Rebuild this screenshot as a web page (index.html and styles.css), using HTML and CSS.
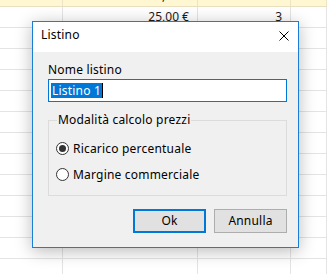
FILE: index.html
```html
<!DOCTYPE html>
<html lang="it">
<head>
<meta charset="utf-8">
<title>Listino</title>
<link rel="stylesheet" href="styles.css">
</head>
<body>
<div class="sheet">
  <div class="row row-sel"><div class="cell"></div><div class="cell num">0,00 €</div><div class="cell num">0</div><div class="cell"></div></div>
  <div class="row"><div class="cell"></div><div class="cell num">25,00 €</div><div class="cell num">3</div><div class="cell"></div></div>
  <div class="row"><div class="cell"></div><div class="cell"></div><div class="cell"></div><div class="cell"></div></div>
  <div class="row"><div class="cell"></div><div class="cell"></div><div class="cell"></div><div class="cell"></div></div>
  <div class="row"><div class="cell"></div><div class="cell"></div><div class="cell"></div><div class="cell"></div></div>
  <div class="row"><div class="cell"></div><div class="cell"></div><div class="cell"></div><div class="cell"></div></div>
  <div class="row"><div class="cell"></div><div class="cell"></div><div class="cell"></div><div class="cell"></div></div>
  <div class="row"><div class="cell"></div><div class="cell"></div><div class="cell"></div><div class="cell"></div></div>
  <div class="row"><div class="cell"></div><div class="cell"></div><div class="cell"></div><div class="cell"></div></div>
  <div class="row"><div class="cell"></div><div class="cell"></div><div class="cell"></div><div class="cell"></div></div>
  <div class="row"><div class="cell"></div><div class="cell"></div><div class="cell"></div><div class="cell"></div></div>
  <div class="row"><div class="cell"></div><div class="cell"></div><div class="cell"></div><div class="cell"></div></div>
  <div class="row"><div class="cell"></div><div class="cell"></div><div class="cell"></div><div class="cell"></div></div>
  <div class="row"><div class="cell"></div><div class="cell"></div><div class="cell"></div><div class="cell"></div></div>
</div>

<div class="dialog">
  <div class="titlebar">
    <span class="title">Listino</span>
    <svg class="close" width="10" height="10" viewBox="0 0 10 10"><path d="M0.5 0.5 L9.5 9.5 M9.5 0.5 L0.5 9.5" stroke="#000" stroke-width="1" fill="none"/></svg>
  </div>
  <div class="body">
    <div class="label">Nome listino</div>
    <div class="input"><span class="sel">Listino 1</span><span class="caret"></span></div>
    <fieldset class="group">
      <legend>Modalità calcolo prezzi</legend>
      <div class="radio-row"><span class="radio checked"></span><span>Ricarico percentuale</span></div>
      <div class="radio-row"><span class="radio"></span><span>Margine commerciale</span></div>
    </fieldset>
    <div class="buttons">
      <div class="btn btn-default">Ok</div>
      <div class="btn">Annulla</div>
    </div>
  </div>
</div>
</body>
</html>
```

FILE: styles.css
```css
html, body {
  margin: 0;
  padding: 0;
}
body {
  width: 327px;
  height: 274px;
  overflow: hidden;
  background: #fff;
  font-family: "Noto Sans", "Open Sans", sans-serif;
  font-size: 12px;
  color: #000;
  position: relative;
}
.sheet {
  margin-top: -14px;
  display: flex;
  flex-direction: column;
}
.row {
  display: grid;
  grid-template-columns: 63px 135px 93px 1fr;
  height: 21px;
  box-sizing: border-box;
  border-bottom: 1px solid #e4e4e4;
}
.row-sel {
  background: #fff6d2;
  border-bottom-color: #e8e0c0;
}
.cell {
  border-right: 1px solid #e4e4e4;
  line-height: 20px;
  color: #1a1a1a;
}
.row-sel .cell {
  border-right-color: #ece4c4;
}
.num {
  text-align: right;
  padding-right: 8px;
}
.dialog {
  position: absolute;
  left: 32px;
  top: 21px;
  width: 267px;
  height: 227px;
  box-sizing: border-box;
  border: 1px solid #1a7fd4;
  background: #f0f0f0;
  box-shadow: 0 3px 16px rgba(0, 0, 0, 0.28);
  display: flex;
  flex-direction: column;
  letter-spacing: 0.2px;
}
.titlebar {
  height: 30px;
  background: #fff;
  display: flex;
  justify-content: space-between;
  align-items: flex-start;
  padding: 5px 9px 0 8px;
  box-sizing: border-box;
}
.title {
  line-height: 16px;
}
.close {
  margin-top: 4px;
}
.body {
  padding: 10px 11px 0 15px;
  display: flex;
  flex-direction: column;
}
.label {
  line-height: 16px;
  height: 17px;
}
.input {
  height: 23px;
  box-sizing: border-box;
  border: 1px solid #0078d7;
  background: #fff;
  display: flex;
  align-items: center;
  padding-left: 2px;
}
.sel {
  background: #0078d7;
  color: #fff;
  line-height: 15px;
  padding: 0 1px;
}
.caret {
  width: 1px;
  height: 15px;
  background: #000;
}
.group {
  margin: 10px 0 0;
  padding: 7px 8px 8px 7px;
  border: 1px solid #dcdcdc;
  min-width: 0;
}
.group legend {
  padding: 0 1px;
  margin-left: 1px;
  line-height: 16px;
}
.radio-row {
  height: 26px;
  display: flex;
  align-items: center;
  gap: 4px;
}
.radio {
  width: 13px;
  height: 13px;
  box-sizing: border-box;
  border: 1px solid #333;
  border-radius: 50%;
  background: #fff;
  display: flex;
  align-items: center;
  justify-content: center;
}
.radio.checked::after {
  content: "";
  width: 7px;
  height: 7px;
  border-radius: 50%;
  background: #333;
}
.buttons {
  margin-top: 13px;
  display: flex;
  justify-content: flex-end;
  gap: 8px;
}
.btn {
  width: 73px;
  height: 24px;
  box-sizing: border-box;
  border: 1px solid #adadad;
  background: #e1e1e1;
  display: flex;
  align-items: center;
  justify-content: center;
  line-height: 16px;
}
.btn-default {
  border: 2px solid #0078d7;
}
```
